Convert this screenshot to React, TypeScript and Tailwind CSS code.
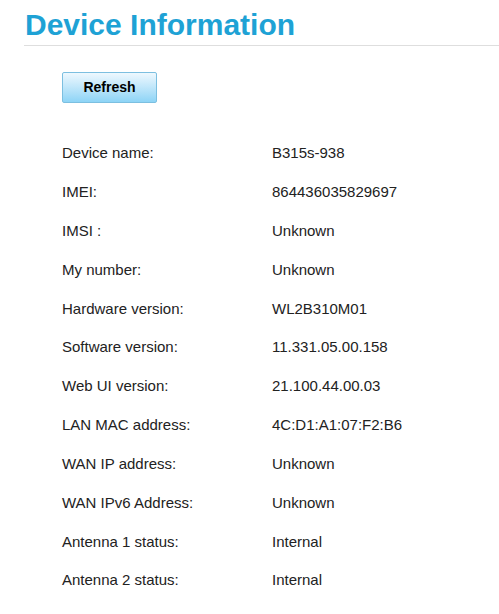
const rows: [string, string][] = [
  ['Device name:', 'B315s-938'],
  ['IMEI:', '864436035829697'],
  ['IMSI :', 'Unknown'],
  ['My number:', 'Unknown'],
  ['Hardware version:', 'WL2B310M01'],
  ['Software version:', '11.331.05.00.158'],
  ['Web UI version:', '21.100.44.00.03'],
  ['LAN MAC address:', '4C:D1:A1:07:F2:B6'],
  ['WAN IP address:', 'Unknown'],
  ['WAN IPv6 Address:', 'Unknown'],
  ['Antenna 1 status:', 'Internal'],
  ['Antenna 2 status:', 'Internal'],
]

export default function App() {
  return (
    <div className="min-h-screen bg-white font-['Liberation_Sans',Arial,sans-serif]">
      <div className="pl-[24px]">
        <h1 className="pt-[10px] pl-[1px] text-[30px] font-bold leading-[30px] text-[#1ea2d5]">
          Device Information
        </h1>
        <div className="mt-[5px] h-px bg-[#dedede]" />
      </div>

      <div className="pl-[62px] pt-[26px]">
        <button
          type="button"
          className="h-[31px] w-[95px] rounded-[2px] border border-[#7cbfe0] bg-gradient-to-b from-[#eef8fe] via-[#bfe6fa] to-[#8dd4f6] text-[14px] font-bold text-black"
        >
          Refresh
        </button>

        <div className="pt-[31px]">
          {rows.map(([label, value]) => (
            <div
              key={label}
              className="flex h-[38.85px] items-center text-[15px] text-[#222]"
            >
              <span className="w-[210px] shrink-0">{label}</span>
              <span>{value}</span>
            </div>
          ))}
        </div>
      </div>
    </div>
  )
}
